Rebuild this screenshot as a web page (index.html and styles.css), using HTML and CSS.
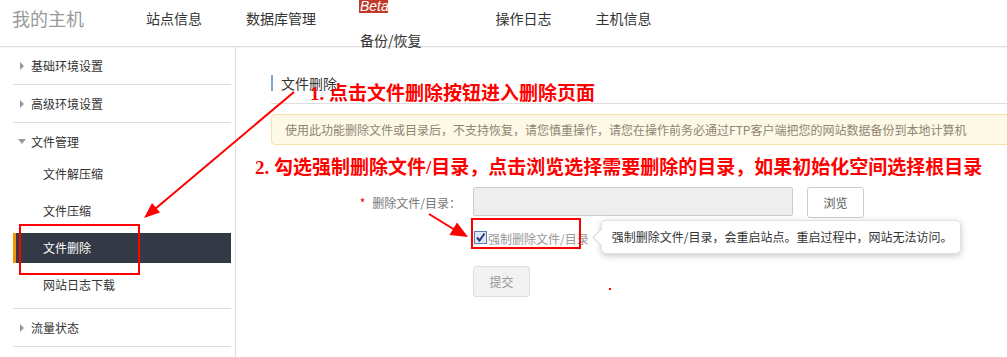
FILE: index.html
```html
<!DOCTYPE html>
<html lang="zh-CN">
<head>
<meta charset="utf-8">
<title>我的主机 - 文件删除</title>
<link rel="stylesheet" href="styles.css">
</head>
<body>
<div class="page">
  <header class="header">
    <div class="logo">我的主机</div>
    <nav class="topnav">
      <a class="topnav-item">站点信息</a>
      <a class="topnav-item">数据库管理</a>
      <a class="topnav-item topnav-beta"><span class="beta">Beta</span><span class="beta-text">备份/恢复</span></a>
      <a class="topnav-item">操作日志</a>
      <a class="topnav-item">主机信息</a>
    </nav>
  </header>
  <div class="body">
    <aside class="sidebar">
      <div class="side-row"><span class="tri-right"></span>基础环境设置</div>
      <div class="side-row"><span class="tri-right"></span>高级环境设置</div>
      <div class="side-group">
        <div class="side-head"><span class="tri-down"></span>文件管理</div>
        <div class="side-sub">文件解压缩</div>
        <div class="side-sub">文件压缩</div>
        <div class="side-sub active">文件删除</div>
        <div class="side-sub">网站日志下载</div>
      </div>
      <div class="side-row"><span class="tri-right"></span>流量状态</div>
    </aside>
    <main class="main">
      <div class="title"><span class="title-text">文件删除</span></div>
      <div class="notice">使用此功能删除文件或目录后，不支持恢复，请您慎重操作，请您在操作前务必通过FTP客户端把您的网站数据备份到本地计算机</div>
      <div class="form">
        <div class="form-row">
          <label class="form-label"><span class="star">*</span>删除文件/目录：</label>
          <div class="input"></div>
          <button class="btn">浏览</button>
        </div>
        <div class="form-row check-row">
          <span class="checkbox"><svg width="11" height="11" viewBox="0 0 11 11"><path d="M2 5.5 L4.5 8.5 L9.5 1.5" fill="none" stroke="#1f3f7a" stroke-width="2"/></svg></span>
          <span class="check-label">强制删除文件/目录</span>
          <div class="tooltip">强制删除文件/目录，会重启站点。重启过程中，网站无法访问。</div>
        </div>
        <div class="form-row submit-row">
          <button class="btn btn-submit">提交</button>
        </div>
      </div>
    </main>
  </div>

  <div class="note note1">1. 点击文件删除按钮进入删除页面</div>
  <div class="note note2">2. 勾选强制删除文件/目录，点击浏览选择需要删除的目录，如果初始化空间选择根目录</div>
  <svg class="marks" width="1007" height="357" viewBox="0 0 1007 357">
    <line x1="294" y1="92" x2="155" y2="209" stroke="#f00" stroke-width="2"/>
    <polygon points="144,218 160,212.5 152,203" fill="#f00"/>
    <rect x="20" y="225" width="119" height="49" fill="none" stroke="#f00" stroke-width="2"/>
    <line x1="429" y1="214" x2="455" y2="230" stroke="#f00" stroke-width="2"/>
    <polygon points="468,237 449.5,235 457,222.5" fill="#f00"/>
    <rect x="472" y="219" width="108" height="29" fill="none" stroke="#f00" stroke-width="2"/>
    <rect x="609" y="288" width="2" height="2" fill="#f00"/>
  </svg>
</div>
</body>
</html>
```

FILE: styles.css
```css
* { box-sizing: border-box; }
html, body { margin: 0; padding: 0; background: #fff; }
body {
  font-family: "Noto Sans CJK SC", "Liberation Sans", sans-serif;
  font-size: 12px;
  color: #333;
}
.page {
  position: relative;
  width: 1007px;
  height: 357px;
  overflow: hidden;
}
.header {
  height: 47px;
  border-bottom: 1px solid #ddd;
  box-shadow: 0 1px 1px rgba(0,0,0,0.04);
  display: flex;
  align-items: flex-start;
  padding-left: 12px;
}
.logo {
  font-size: 18px;
  line-height: 36px;
  color: #999;
  margin-right: 40px;
}
.topnav { display: flex; align-items: flex-start; }
.topnav-item {
  font-size: 14px;
  line-height: 36px;
  padding: 0 22px;
  color: #333;
}
.topnav-beta {
  display: flex;
  flex-direction: column;
  align-items: flex-start;
  line-height: 20px;
  margin-left: -1px;
  margin-right: 30px;
}
.beta {
  display: block;
  background: #c0392b;
  color: #fff;
  font-family: "Liberation Sans", sans-serif;
  font-style: italic;
  font-size: 14px;
  line-height: 13px;
  height: 13px;
  width: 29px;
  overflow: hidden;
  padding-left: 1px;
}
.beta-text { margin-top: 17px; margin-left: 1px; }

.body { display: flex; height: 310px; }
.sidebar {
  width: 236px;
  border-right: 1px solid #ddd;
  padding: 0 4px 0 13px;
  flex: none;
}
.side-row, .side-head {
  display: flex;
  align-items: center;
  padding-left: 7px;
  color: #333;
}
.side-row {
  height: 38px;
  border-bottom: 1px solid #ddd;
}
.side-head { height: 36px; }
.side-group { border-bottom: 1px solid #ddd; padding-bottom: 1px; }
.tri-right {
  width: 0; height: 0;
  border-top: 4px solid transparent;
  border-bottom: 4px solid transparent;
  border-left: 4px solid #999;
  margin-right: 7px;
}
.tri-down {
  width: 0; height: 0;
  border-left: 4px solid transparent;
  border-right: 4px solid transparent;
  border-top: 5px solid #999;
  margin-left: -2px;
  margin-right: 5px;
}
.side-sub {
  height: 30px;
  line-height: 30px;
  padding-left: 30px;
  margin-bottom: 7px;
  color: #333;
}
.side-sub.active {
  background: #333945;
  color: #fff;
  border-left: 3px solid #f39800;
  padding-left: 27px;
}

.main {
  flex: 1;
  padding-left: 35px;
  min-width: 0;
}
.title {
  padding: 28px 0 12px;
  border-bottom: 1px solid #ddd;
  margin-right: -10px;
}
.title-text {
  display: block;
  border-left: 2px solid #7ea7d8;
  padding-left: 8px;
  font-size: 14px;
  line-height: 16px;
  color: #333;
}
.notice {
  margin-top: 10px;
  margin-right: -10px;
  height: 31px;
  line-height: 29px;
  border: 1px solid #f6e2a8;
  border-radius: 4px;
  background: #fdf9e6;
  color: #8d8474;
  padding-left: 13px;
  white-space: nowrap;
}
.form { margin-top: 42px; }
.form-row { display: flex; align-items: flex-start; }
.form-label {
  width: 190px;
  text-align: right;
  line-height: 31px;
  color: #777;
}
.star { color: #e00; margin-right: 7px; }
.input {
  margin-left: 12px;
  width: 320px;
  height: 29px;
  border: 1px solid #ccc;
  background: #eee;
  border-radius: 2px;
}
.btn {
  font-family: inherit;
  font-size: 12px;
  margin-left: 14px;
  width: 57px;
  height: 31px;
  border: 1px solid #ccc;
  border-radius: 3px;
  background: #fff;
  color: #555;
  padding: 0;
}
.check-row {
  margin-top: 2px;
  align-items: center;
  padding-left: 203px;
}
.checkbox {
  width: 13px;
  height: 13px;
  border: 1px solid #5e7fae;
  background: #dfe8f5;
  display: flex;
  align-items: center;
  justify-content: center;
  margin-top: 1px;
}
.check-label {
  color: #999;
  margin-left: 1px;
  line-height: 18px;
  padding-top: 3px;
}
.tooltip {
  position: relative;
  margin-left: 12px;
  width: 360px;
  height: 34px;
  line-height: 32px;
  padding-left: 10px;
  background: #fff;
  border: 1px solid #e2e2e2;
  border-radius: 5px;
  box-shadow: 0 2px 6px rgba(0,0,0,0.22);
  color: #333;
  white-space: nowrap;
}
.tooltip::before {
  content: "";
  position: absolute;
  left: -7px;
  top: 10px;
  width: 12px;
  height: 12px;
  background: #fff;
  border-left: 1px solid #d8d8d8;
  border-bottom: 1px solid #d8d8d8;
  transform: rotate(45deg);
}
.submit-row { margin-top: 12px; padding-left: 202px; }
.btn-submit {
  margin-left: 0;
  background: #f2f2f2;
  border-color: #ddd;
  color: #999;
}

.note {
  position: absolute;
  color: #f00;
  font-family: "Liberation Serif", "Noto Sans CJK SC", serif;
  font-weight: bold;
  font-size: 19px;
  line-height: 20px;
  white-space: nowrap;
}
.note1 { left: 310px; top: 84px; }
.note2 { left: 255px; top: 158px; }
.marks { position: absolute; left: 0; top: 0; pointer-events: none; }
```
